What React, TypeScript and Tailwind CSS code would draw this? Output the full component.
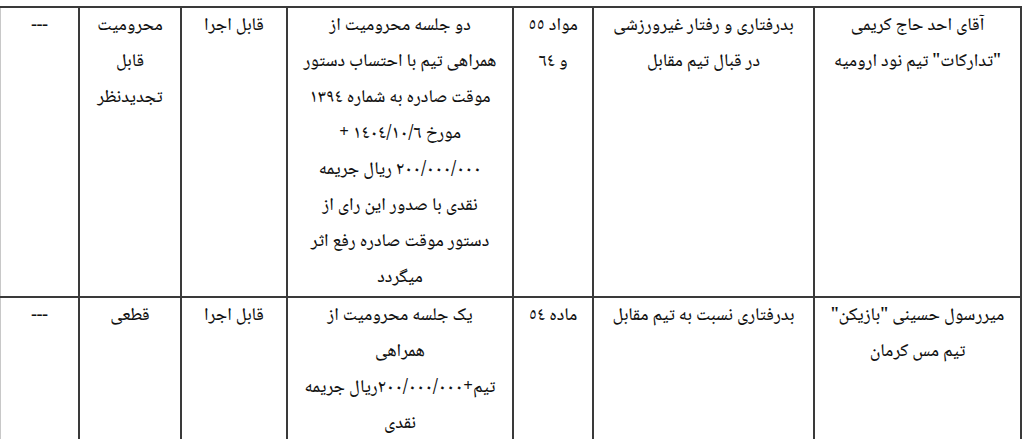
const rows = [
  {
    name: ['آقای احد حاج کریمی', '"تدارکات" تیم نود ارومیه'],
    offense: ['بدرفتاری و رفتار غیرورزشی', 'در قبال تیم مقابل'],
    article: ['مواد ٥٥', 'و ٦٤'],
    ruling: [
      'دو جلسه محرومیت از',
      'همراهی تیم با احتساب دستور',
      'موقت صادره به شماره ١٣٩٤',
      'مورخ ١٤٠٤/١٠/٦ +',
      '٢٠٠/٠٠٠/٠٠٠ ریال جریمه',
      'نقدی با صدور این رای از',
      'دستور موقت صادره رفع اثر',
      'میگردد',
    ],
    status: ['قابل اجرا'],
    appeal: ['محرومیت', 'قابل', 'تجدیدنظر'],
    note: '---',
  },
  {
    name: ['میررسول حسینی "بازیکن"', 'تیم مس کرمان'],
    offense: ['بدرفتاری نسبت به تیم مقابل'],
    article: ['ماده ٥٤'],
    ruling: ['یک جلسه محرومیت از', 'همراهی', 'تیم+٢٠٠/٠٠٠/٠٠٠ریال جریمه', 'نقدی'],
    status: ['قابل اجرا'],
    appeal: ['قطعی'],
    note: '---',
  },
]

function Lines({ lines }: { lines: string[] }) {
  return (
    <>
      {lines.map((l, i) => (
        <div key={i} className="whitespace-nowrap">
          {l}
        </div>
      ))}
    </>
  )
}

const cell = 'border-l-2 border-[#3a3a3a] text-center'

export default function App() {
  return (
    <div
      className="h-[439px] w-[1023px] overflow-hidden bg-white text-[18px] font-medium leading-[36px] text-[#111]"
      style={{ fontFamily: '"Noto Naskh Arabic", "Noto Sans Arabic", "DejaVu Sans", serif' }}
    >
      <div dir="rtl" className="mt-[6px] w-[1022px] border-t-2 border-r-2 border-[#3a3a3a]">
        {rows.map((r, i) => (
          <div
            key={i}
            className={
              'grid grid-cols-[207px_221px_80px_226px_106px_102px_78px] ' +
              (i > 0 ? 'border-t-2 border-[#3a3a3a]' : '')
            }
          >
            <div className={cell}>
              <Lines lines={r.name} />
            </div>
            <div className={cell}>
              <Lines lines={r.offense} />
            </div>
            <div className={cell}>
              <Lines lines={r.article} />
            </div>
            <div className={cell}>
              <Lines lines={r.ruling} />
            </div>
            <div className={cell}>
              <Lines lines={r.status} />
            </div>
            <div className={cell}>
              <Lines lines={r.appeal} />
            </div>
            <div className="border-l border-[#c8c8c8] text-center" dir="ltr">
              {r.note}
            </div>
          </div>
        ))}
      </div>
    </div>
  )
}
